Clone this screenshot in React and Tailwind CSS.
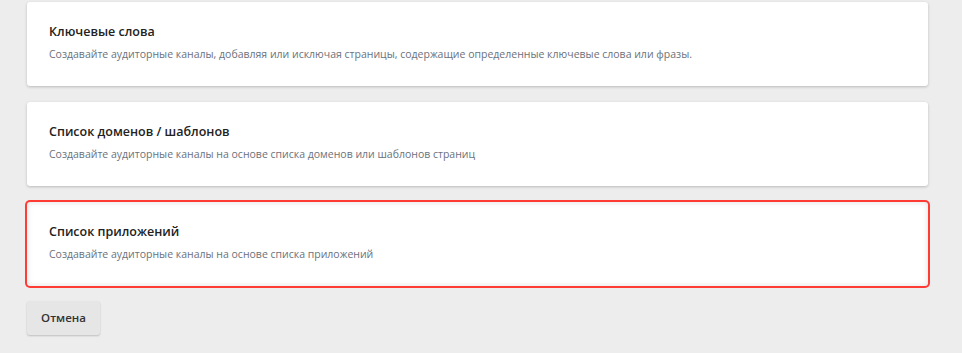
import React from 'react';

const options = [
  {
    title: 'Ключевые слова',
    text: 'Создавайте аудиторные каналы, добавляя или исключая страницы, содержащие определенные ключевые слова или фразы.',
  },
  {
    title: 'Список доменов / шаблонов',
    text: 'Создавайте аудиторные каналы на основе списка доменов или шаблонов страниц',
  },
  {
    title: 'Список приложений',
    text: 'Создавайте аудиторные каналы на основе списка приложений',
    selected: true,
  },
];

const OptionCard = ({ title, text, selected }) => (
  <div
    className={`bg-white rounded-[3px] h-[84px] px-[22px] pt-[21px] cursor-pointer ${
      selected
        ? 'ring-2 ring-[#ff3b36] shadow-[inset_0_0_6px_rgba(0,0,0,0.12)]'
        : 'shadow-[0_1px_3px_rgba(0,0,0,0.22)]'
    }`}
  >
    <div className="text-[12.5px] leading-[18px] font-semibold text-[#222]">{title}</div>
    <div className="mt-[5px] text-[10.5px] leading-[16px] text-[#6b727c]">{text}</div>
  </div>
);

export default function App() {
  return (
    <div
      className="min-h-[353px] bg-[#ededed] pl-[27px] pt-[2px]"
      style={{ fontFamily: '"Open Sans", "Noto Sans", sans-serif' }}
    >
      <div className="w-[901px] flex flex-col gap-4">
        {options.map((o) => (
          <OptionCard key={o.title} {...o} />
        ))}
      </div>
      <button className="mt-[15px] h-[34px] w-[73px] rounded-[3px] bg-[#e6e6e6] text-[11.5px] font-semibold text-[#333] shadow-[0_1px_2px_rgba(0,0,0,0.2)]">
        Отмена
      </button>
    </div>
  );
}
